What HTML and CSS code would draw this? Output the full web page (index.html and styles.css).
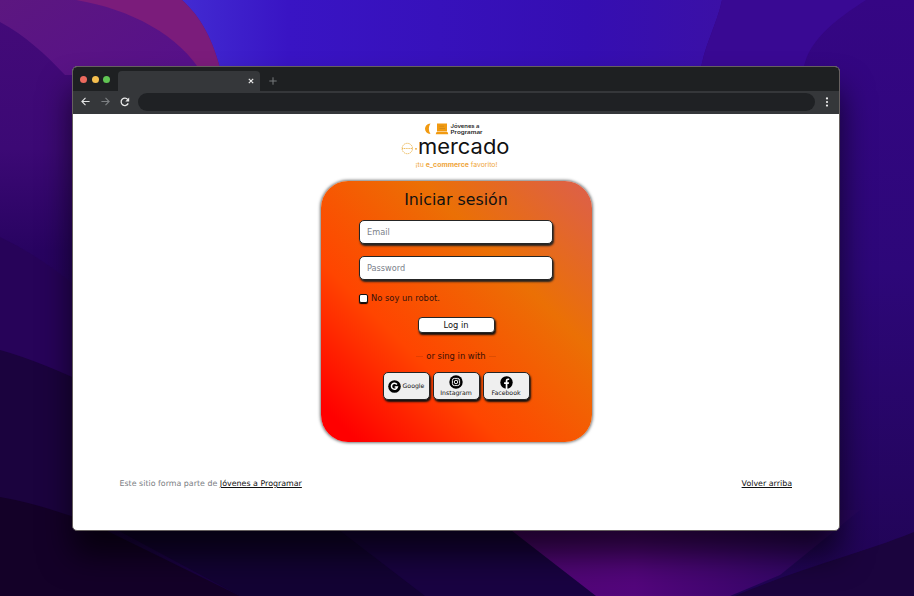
FILE: index.html
```html
<!DOCTYPE html>
<html lang="es">
<head>
<meta charset="utf-8">
<title>eMercado - Iniciar sesión</title>
<link rel="stylesheet" href="styles.css">
</head>
<body>
<svg class="wallpaper" viewBox="0 0 914 596" preserveAspectRatio="none" aria-hidden="true">
  <defs>
    <linearGradient id="left" x1="0" y1="0" x2="0" y2="1"><stop offset="0" stop-color="#440a79"/><stop offset=".25" stop-color="#3c0975"/><stop offset=".42" stop-color="#280361"/><stop offset="1" stop-color="#190241"/></linearGradient>
    <linearGradient id="right" x1="0" y1="0" x2="0" y2="1"><stop offset="0" stop-color="#350684"/><stop offset=".45" stop-color="#2d0779"/><stop offset="1" stop-color="#200453"/></linearGradient>
    <linearGradient id="blue" x1="0" x2="1"><stop offset="0" stop-color="#422bd2"/><stop offset=".2" stop-color="#3914c4"/><stop offset=".75" stop-color="#350eb2"/><stop offset="1" stop-color="#3b10a6"/></linearGradient>
    <linearGradient id="violet" x1="0" y1="0" x2="1" y2=".5"><stop offset="0" stop-color="#5c1780"/><stop offset="1" stop-color="#571189"/></linearGradient>
    <linearGradient id="magenta" x1="0" x2="1"><stop offset="0" stop-color="#4e0670"/><stop offset=".4" stop-color="#53067c"/><stop offset="1" stop-color="#27065e"/></linearGradient>
  </defs>
  <rect width="914" height="596" fill="url(#right)"/>
  <rect width="500" height="596" fill="url(#left)"/>
  <path d="M180 0H722C717 25 703 47 700 75H200Z" fill="url(#blue)"/>
  <path d="M722 0H866C835 20 804 43 803 75H700C703 47 717 25 722 0Z" fill="#390993"/>
  <path d="M0 0H182C201 17 213 39 222 75H65C46 55 25 35 0 22Z" fill="url(#violet)"/>
  <path d="M76 0H182C201 17 213 39 222 75H203C180 35 130 9 76 0Z" fill="#7b1c7b"/>
  <path d="M0 237Q42 257 80 290V596H0Z" fill="#270359"/>
  <path d="M0 350Q40 361 100 390V596H0Z" fill="#1b033e"/>
  <path d="M0 497Q45 505 95 525L240 596H0Z" fill="#140128"/>
  <path d="M80 510H505L596 596H240Z" fill="#130334"/>
  <path d="M300 500H500L596 596H425Z" fill="#190342"/>
  <path d="M485 510H860L780 575L730 596H596Z" fill="url(#magenta)"/>
  <path d="M914 532C857 555 808 565 735 596H914Z" fill="#1b043e"/>
</svg>
<div class="window">
  <div class="tabs">
    <div class="lights"><i class="red"></i><i class="yellow"></i><i class="green"></i></div>
    <div class="tab"><svg width="6" height="6" viewBox="0 0 6 6"><path d="M.8.8 5.2 5.2M5.2.8.8 5.2" stroke="#e6e6e6" stroke-width="1.2"/></svg></div>
    <svg class="plus" width="8" height="8" viewBox="0 0 8 8"><path d="M4 .3V7.7M.3 4H7.7" stroke="#777a7d" stroke-width="1"/></svg>
  </div>
  <div class="toolbar">
    <svg width="9" height="9" viewBox="0 0 9 9" fill="none" stroke="#e3e4e5" stroke-width="1.1"><path d="M8.6 4.5H1M4.5.9.9 4.5 4.5 8.1"/></svg>
    <svg width="9" height="9" viewBox="0 0 9 9" fill="none" stroke="#7d8083" stroke-width="1.1"><path d="M.4 4.5H8M4.5.9 8.1 4.5 4.5 8.1"/></svg>
    <svg width="10" height="10" viewBox="0 0 10 10"><path d="M8.2 6.4A3.7 3.7 0 1 1 7.8 2.6" fill="none" stroke="#e9e9e9" stroke-width="1.3"/><path d="M9.2.6V4.5H5.3Z" fill="#e9e9e9"/></svg>
    <div class="address"></div>
    <svg class="dots" width="4" height="10" viewBox="0 0 4 10" fill="#eee"><circle cx="2" cy="1.4" r="1.1"/><circle cx="2" cy="5" r="1.1"/><circle cx="2" cy="8.6" r="1.1"/></svg>
  </div>
  <main class="page">
    <svg class="logo" width="114" height="52" viewBox="0 0 114 52">
      <path d="M30.500 4.500C23.200 5 23.200 14.500 30.500 15C28.300 12 28.300 7.500 30.500 4.500Z" fill="#f19a11"/>
      <path d="M37 4.500H47V12.500H37ZM36.500 13H47.500L48.300 15.200H35.700Z" fill="#f19a11"/>
      <path d="M39.500 7.200H44M39.500 9.500H45" stroke="#c98518" stroke-width=".7"/>
      <g class="brand"><text x="50.500" y="9.300" textLength="29" lengthAdjust="spacingAndGlyphs">Jóvenes a</text><text x="50.500" y="15.100" textLength="32" lengthAdjust="spacingAndGlyphs">Programar</text></g>
      <g fill="none" stroke="#e9ab38" stroke-width=".8"><circle cx="7.300" cy="29.500" r="5.200" stroke-dasharray="1.4 .6"/><path d="M2 29.500H12.500" stroke-dasharray="1.2 .6"/></g>
      <circle cx="16" cy="29.800" r=".9" fill="#eda126"/>
      <text class="wordmark" x="18" y="34.500" textLength="91.500" lengthAdjust="spacingAndGlyphs">mercado</text>
      <text class="tagline" x="15.500" y="48" textLength="82" lengthAdjust="spacingAndGlyphs">¡tu <tspan>e_commerce</tspan> favorito!</text>
    </svg>
    <form class="card">
      <h1>Iniciar sesión</h1>
      <input class="field" type="email" placeholder="Email">
      <input class="field" type="password" placeholder="Password">
      <label class="robot"><input type="checkbox">No soy un robot.</label>
      <button class="login" type="button">Log in</button>
      <p class="divider"><span>or sing in with</span></p>
      <div class="social">
        <button type="button" class="google"><svg width="13" height="13" viewBox="0 0 13 13"><circle cx="6.500" cy="6.500" r="6.300"/><path d="M8.900 4.500A3 3 0 1 0 9.400 6.900H6.700" fill="none" stroke="#fff" stroke-width="1.500"/></svg><span>Google</span></button>
        <button type="button"><svg width="14" height="14" viewBox="0 0 14 14"><circle cx="7" cy="7" r="6.700"/><g fill="none" stroke="#fff" stroke-width=".95"><rect x="3.400" y="3.400" width="7.200" height="7.200" rx="2"/><circle cx="7" cy="7" r="1.750"/></g><circle cx="9" cy="5" r=".5" fill="#fff"/></svg><span>Instagram</span></button>
        <button type="button"><svg width="13" height="13" viewBox="0 0 13 13"><circle cx="6.500" cy="6.500" r="6.200"/><path d="M5.700 12.900V8H4.100V6.300H5.700V5C5.700 3.300 6.700 2.500 8 2.500L9.200 2.600V4.100H8.400C7.600 4.100 7.400 4.500 7.400 5.100V6.300H9.100L8.800 8H7.400V12.900Z" fill="#fff"/></svg><span>Facebook</span></button>
      </div>
    </form>
    <footer><p>Este sitio forma parte de <a href="#jap">Jóvenes a Programar</a></p><a href="#top">Volver arriba</a></footer>
  </main>
</div>
</body>
</html>
```
FILE: styles.css
```css
* { box-sizing: border-box; }
html, body { margin: 0; height: 596px; overflow: hidden; }
body {
  padding: 66px 74px 0 72px;
  background: #210453;
  font-family: "DejaVu Sans", Verdana, sans-serif;
  font-size: 8px;
  color: #111;
}
svg { display: block; flex: none; }
.wallpaper { position: absolute; inset: 0; width: 914px; height: 596px; z-index: -1; }
.window {
  height: 465px;
  border: 1px solid #66605f;
  border-radius: 5px;
  background: #fff;
  overflow: hidden;
  box-shadow: 0 24px 32px rgba(0, 0, 0, .65);
}
.tabs { display: flex; height: 24px; background: #1e2022; }
.lights { display: flex; gap: 4.500px; width: 45px; padding: 8.500px 0 0 7px; }
.lights i { width: 7px; height: 7px; border-radius: 50%; }
.red { background: #ec6a5e; }
.yellow { background: #f4be4f; }
.green { background: #61c554; }
.tab {
  display: flex;
  justify-content: flex-end;
  align-items: center;
  width: 142px;
  height: 20px;
  margin-top: 4px;
  padding-right: 6px;
  border-radius: 4px 4px 0 0;
  background: #35373a;
}
.plus { margin: 10px 0 0 9px; }
.toolbar {
  display: flex;
  align-items: center;
  height: 23px;
  padding: 0 10px 2px 8px;
  gap: 10.500px;
  background: #35373a;
}
.address { flex: 1; height: 18px; margin-left: -2.500px; border-radius: 9px; background: #1f2124; }
.page { display: flex; flex-direction: column; align-items: center; height: 416px; }
.logo { margin: 5px 0 10px 2px; }
.brand { font-family: Inter, sans-serif; font-size: 4.800px; font-weight: 600; fill: #222; }
.wordmark { font-family: Inter, sans-serif; font-size: 20.500px; fill: #111; }
.tagline { font-family: Inter, sans-serif; font-size: 6.500px; fill: #efa63a; }
.tagline tspan { font-weight: 700; }
.card {
  display: flex;
  flex-direction: column;
  align-items: center;
  width: 271px;
  height: 261px;
  padding: 9px 38.500px 0;
  border-radius: 27px;
  background: linear-gradient(45deg, red 7%, orangered 34%, #eb7005 68%, #dc5f4c 100%);
  box-shadow: 0 0 3px 1px #777;
}
h1 { margin: 0 0 10px; font-size: 15.800px; font-weight: 400; line-height: 20px; }
.field {
  width: 194px;
  height: 24px;
  margin: 0 0 12px;
  padding: 0 7px;
  border: 1px solid #252525;
  border-radius: 5px;
  background: #fff;
  box-shadow: 1px 2px 2px #222;
  font: inherit;
  font-size: 8.200px;
}
.field::placeholder { color: #7b818a; opacity: 1; }
.robot { display: flex; align-items: center; align-self: flex-start; gap: 3px; height: 12px; font-size: 8.350px; color: #38130b; }
.robot input {
  appearance: none;
  width: 9px;
  height: 9px;
  margin: 0;
  border: 1px solid #111;
  border-radius: 2px;
  background: #fff;
  box-shadow: 0 1px 1px #000;
}
button { padding: 0; border: 1px solid #252525; box-shadow: 1px 2px 2px #111; font: inherit; color: #111; }
.login { width: 77px; height: 16px; margin: 13px 0 18px; border-radius: 4px; background: #fff; font-size: 8.300px; }
.divider { display: flex; align-items: center; gap: 3px; height: 10px; margin: 0 0 11px; font-size: 8.400px; color: #391006; }
.divider::before, .divider::after { content: ""; width: 7px; height: 1px; background: rgba(80, 20, 0, .15); }
.social { display: flex; gap: 3px; }
.social button {
  display: flex;
  flex-direction: column;
  align-items: center;
  justify-content: center;
  width: 47px;
  height: 28px;
  border-radius: 5px;
  background: #efefef;
  font-size: 6.200px;
  line-height: 8px;
}
.social .google { flex-direction: row; gap: 2px; }
footer {
  display: flex;
  justify-content: space-between;
  align-self: stretch;
  margin-top: 36px;
  padding: 0 47px 0 46.500px;
  font-size: 7.920px;
  line-height: 12px;
  color: #7c8084;
}
footer p { margin: 0; }
footer a { color: #111; }
```
